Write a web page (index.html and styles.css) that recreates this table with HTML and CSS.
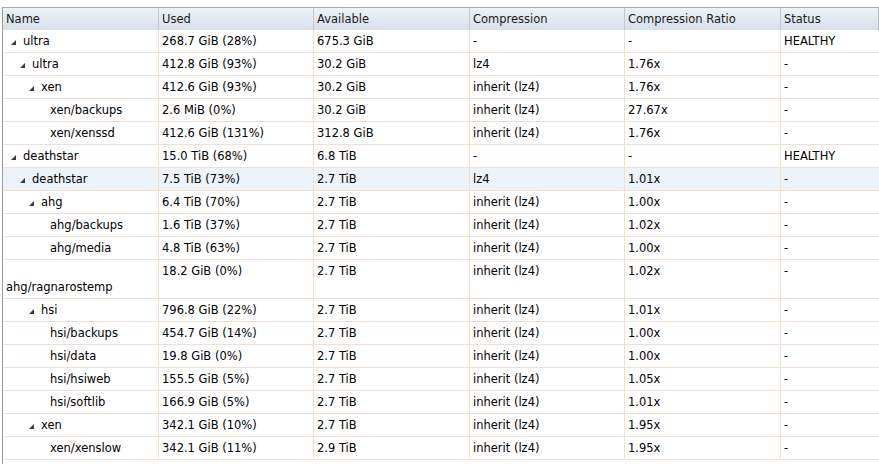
FILE: index.html
```html
<!DOCTYPE html>
<html>
<head>
<meta charset="utf-8">
<link rel="stylesheet" href="styles.css">
</head>
<body>
<div class="grid">
  <div class="row head">
    <div class="hc">Name</div>
    <div class="hc">Used</div>
    <div class="hc">Available</div>
    <div class="hc">Compression</div>
    <div class="hc">Compression Ratio</div>
    <div class="hc">Status</div>
  </div>

  <div class="row">
    <div class="c name"><span class="exp"><svg width="5" height="5" viewBox="0 0 5 5"><polygon points="5,0 5,5 0,5"/></svg></span><span class="t">ultra</span></div>
    <div class="c">268.7 GiB (28%)</div><div class="c">675.3 GiB</div><div class="c">-</div><div class="c">-</div><div class="c">HEALTHY</div>
  </div>
  <div class="row">
    <div class="c name"><span class="ind"></span><span class="exp"><svg width="5" height="5" viewBox="0 0 5 5"><polygon points="5,0 5,5 0,5"/></svg></span><span class="t">ultra</span></div>
    <div class="c">412.8 GiB (93%)</div><div class="c">30.2 GiB</div><div class="c">lz4</div><div class="c">1.76x</div><div class="c">-</div>
  </div>
  <div class="row">
    <div class="c name"><span class="ind"></span><span class="ind"></span><span class="exp"><svg width="5" height="5" viewBox="0 0 5 5"><polygon points="5,0 5,5 0,5"/></svg></span><span class="t">xen</span></div>
    <div class="c">412.6 GiB (93%)</div><div class="c">30.2 GiB</div><div class="c">inherit (lz4)</div><div class="c">1.76x</div><div class="c">-</div>
  </div>
  <div class="row">
    <div class="c name"><span class="ind"></span><span class="ind"></span><span class="ind"></span><span class="exp"></span><span class="t">xen/backups</span></div>
    <div class="c">2.6 MiB (0%)</div><div class="c">30.2 GiB</div><div class="c">inherit (lz4)</div><div class="c">27.67x</div><div class="c">-</div>
  </div>
  <div class="row">
    <div class="c name"><span class="ind"></span><span class="ind"></span><span class="ind"></span><span class="exp"></span><span class="t">xen/xenssd</span></div>
    <div class="c">412.6 GiB (131%)</div><div class="c">312.8 GiB</div><div class="c">inherit (lz4)</div><div class="c">1.76x</div><div class="c">-</div>
  </div>
  <div class="row">
    <div class="c name"><span class="exp"><svg width="5" height="5" viewBox="0 0 5 5"><polygon points="5,0 5,5 0,5"/></svg></span><span class="t">deathstar</span></div>
    <div class="c">15.0 TiB (68%)</div><div class="c">6.8 TiB</div><div class="c">-</div><div class="c">-</div><div class="c">HEALTHY</div>
  </div>
  <div class="row over">
    <div class="c name"><span class="ind"></span><span class="exp"><svg width="5" height="5" viewBox="0 0 5 5"><polygon points="5,0 5,5 0,5"/></svg></span><span class="t">deathstar</span></div>
    <div class="c">7.5 TiB (73%)</div><div class="c">2.7 TiB</div><div class="c">lz4</div><div class="c">1.01x</div><div class="c">-</div>
  </div>
  <div class="row">
    <div class="c name"><span class="ind"></span><span class="ind"></span><span class="exp"><svg width="5" height="5" viewBox="0 0 5 5"><polygon points="5,0 5,5 0,5"/></svg></span><span class="t">ahg</span></div>
    <div class="c">6.4 TiB (70%)</div><div class="c">2.7 TiB</div><div class="c">inherit (lz4)</div><div class="c">1.00x</div><div class="c">-</div>
  </div>
  <div class="row">
    <div class="c name"><span class="ind"></span><span class="ind"></span><span class="ind"></span><span class="exp"></span><span class="t">ahg/backups</span></div>
    <div class="c">1.6 TiB (37%)</div><div class="c">2.7 TiB</div><div class="c">inherit (lz4)</div><div class="c">1.02x</div><div class="c">-</div>
  </div>
  <div class="row">
    <div class="c name"><span class="ind"></span><span class="ind"></span><span class="ind"></span><span class="exp"></span><span class="t">ahg/media</span></div>
    <div class="c">4.8 TiB (63%)</div><div class="c">2.7 TiB</div><div class="c">inherit (lz4)</div><div class="c">1.00x</div><div class="c">-</div>
  </div>
  <div class="row">
    <div class="c name"><span class="ind"></span><span class="ind"></span><span class="ind"></span><span class="exp"></span><span class="t">ahg/ragnarostemp</span></div>
    <div class="c">18.2 GiB (0%)</div><div class="c">2.7 TiB</div><div class="c">inherit (lz4)</div><div class="c">1.02x</div><div class="c">-</div>
  </div>
  <div class="row">
    <div class="c name"><span class="ind"></span><span class="ind"></span><span class="exp"><svg width="5" height="5" viewBox="0 0 5 5"><polygon points="5,0 5,5 0,5"/></svg></span><span class="t">hsi</span></div>
    <div class="c">796.8 GiB (22%)</div><div class="c">2.7 TiB</div><div class="c">inherit (lz4)</div><div class="c">1.01x</div><div class="c">-</div>
  </div>
  <div class="row">
    <div class="c name"><span class="ind"></span><span class="ind"></span><span class="ind"></span><span class="exp"></span><span class="t">hsi/backups</span></div>
    <div class="c">454.7 GiB (14%)</div><div class="c">2.7 TiB</div><div class="c">inherit (lz4)</div><div class="c">1.00x</div><div class="c">-</div>
  </div>
  <div class="row">
    <div class="c name"><span class="ind"></span><span class="ind"></span><span class="ind"></span><span class="exp"></span><span class="t">hsi/data</span></div>
    <div class="c">19.8 GiB (0%)</div><div class="c">2.7 TiB</div><div class="c">inherit (lz4)</div><div class="c">1.00x</div><div class="c">-</div>
  </div>
  <div class="row">
    <div class="c name"><span class="ind"></span><span class="ind"></span><span class="ind"></span><span class="exp"></span><span class="t">hsi/hsiweb</span></div>
    <div class="c">155.5 GiB (5%)</div><div class="c">2.7 TiB</div><div class="c">inherit (lz4)</div><div class="c">1.05x</div><div class="c">-</div>
  </div>
  <div class="row">
    <div class="c name"><span class="ind"></span><span class="ind"></span><span class="ind"></span><span class="exp"></span><span class="t">hsi/softlib</span></div>
    <div class="c">166.9 GiB (5%)</div><div class="c">2.7 TiB</div><div class="c">inherit (lz4)</div><div class="c">1.01x</div><div class="c">-</div>
  </div>
  <div class="row">
    <div class="c name"><span class="ind"></span><span class="ind"></span><span class="exp"><svg width="5" height="5" viewBox="0 0 5 5"><polygon points="5,0 5,5 0,5"/></svg></span><span class="t">xen</span></div>
    <div class="c">342.1 GiB (10%)</div><div class="c">2.7 TiB</div><div class="c">inherit (lz4)</div><div class="c">1.95x</div><div class="c">-</div>
  </div>
  <div class="row">
    <div class="c name"><span class="ind"></span><span class="ind"></span><span class="ind"></span><span class="exp"></span><span class="t">xen/xenslow</span></div>
    <div class="c">342.1 GiB (11%)</div><div class="c">2.9 TiB</div><div class="c">inherit (lz4)</div><div class="c">1.95x</div><div class="c">-</div>
  </div>
</div>
</body>
</html>
```

FILE: styles.css
```css
html, body {
  margin: 0;
  padding: 0;
  background: #fff;
  height: 100%;
  overflow: hidden;
}
body {
  padding: 7px 0 0 2px;
  box-sizing: border-box;
  font-family: "DejaVu Sans", Verdana, sans-serif;
  font-size: 11.5px;
  color: #000;
}
.grid {
  border-left: 1px solid #9c9c9c;
  border-top: 1px solid #a9a9a9;
  height: 100%;
  width: 876px;
}
.row {
  display: grid;
  grid-template-columns: 156px 155px 156px 155px 156px 98px;
  border-bottom: 1px solid #efe0d1;
}
.row.over {
  background: #eef3fa;
}
.row.head {
  border-bottom: none;
  background: linear-gradient(to bottom, #edf2f8 0%, #e0e8f1 55%, #d6e0eb 100%);
}
.hc {
  box-sizing: border-box;
  height: 22px;
  padding: 3px 3px;
  line-height: 16px;
  border-right: 1px solid #c3c9d1;
  color: #1a1a1a;
  white-space: nowrap;
  overflow: hidden;
}
.hc:last-child {
  border-right: 1px solid #b9bec5;
}
.c {
  box-sizing: border-box;
  padding: 3px 3px 3px 3px;
  line-height: 16px;
  border-right: 1px solid #efe0d1;
  overflow: hidden;
}
.c:last-child {
  border-right: none;
}
.ind {
  display: inline-block;
  width: 9px;
  height: 1px;
}
.exp {
  display: inline-block;
  width: 17px;
  height: 5px;
}
.exp svg {
  display: block;
  margin-left: 5px;
  fill: #3a3a3a;
}
.t {
  white-space: nowrap;
}
```
